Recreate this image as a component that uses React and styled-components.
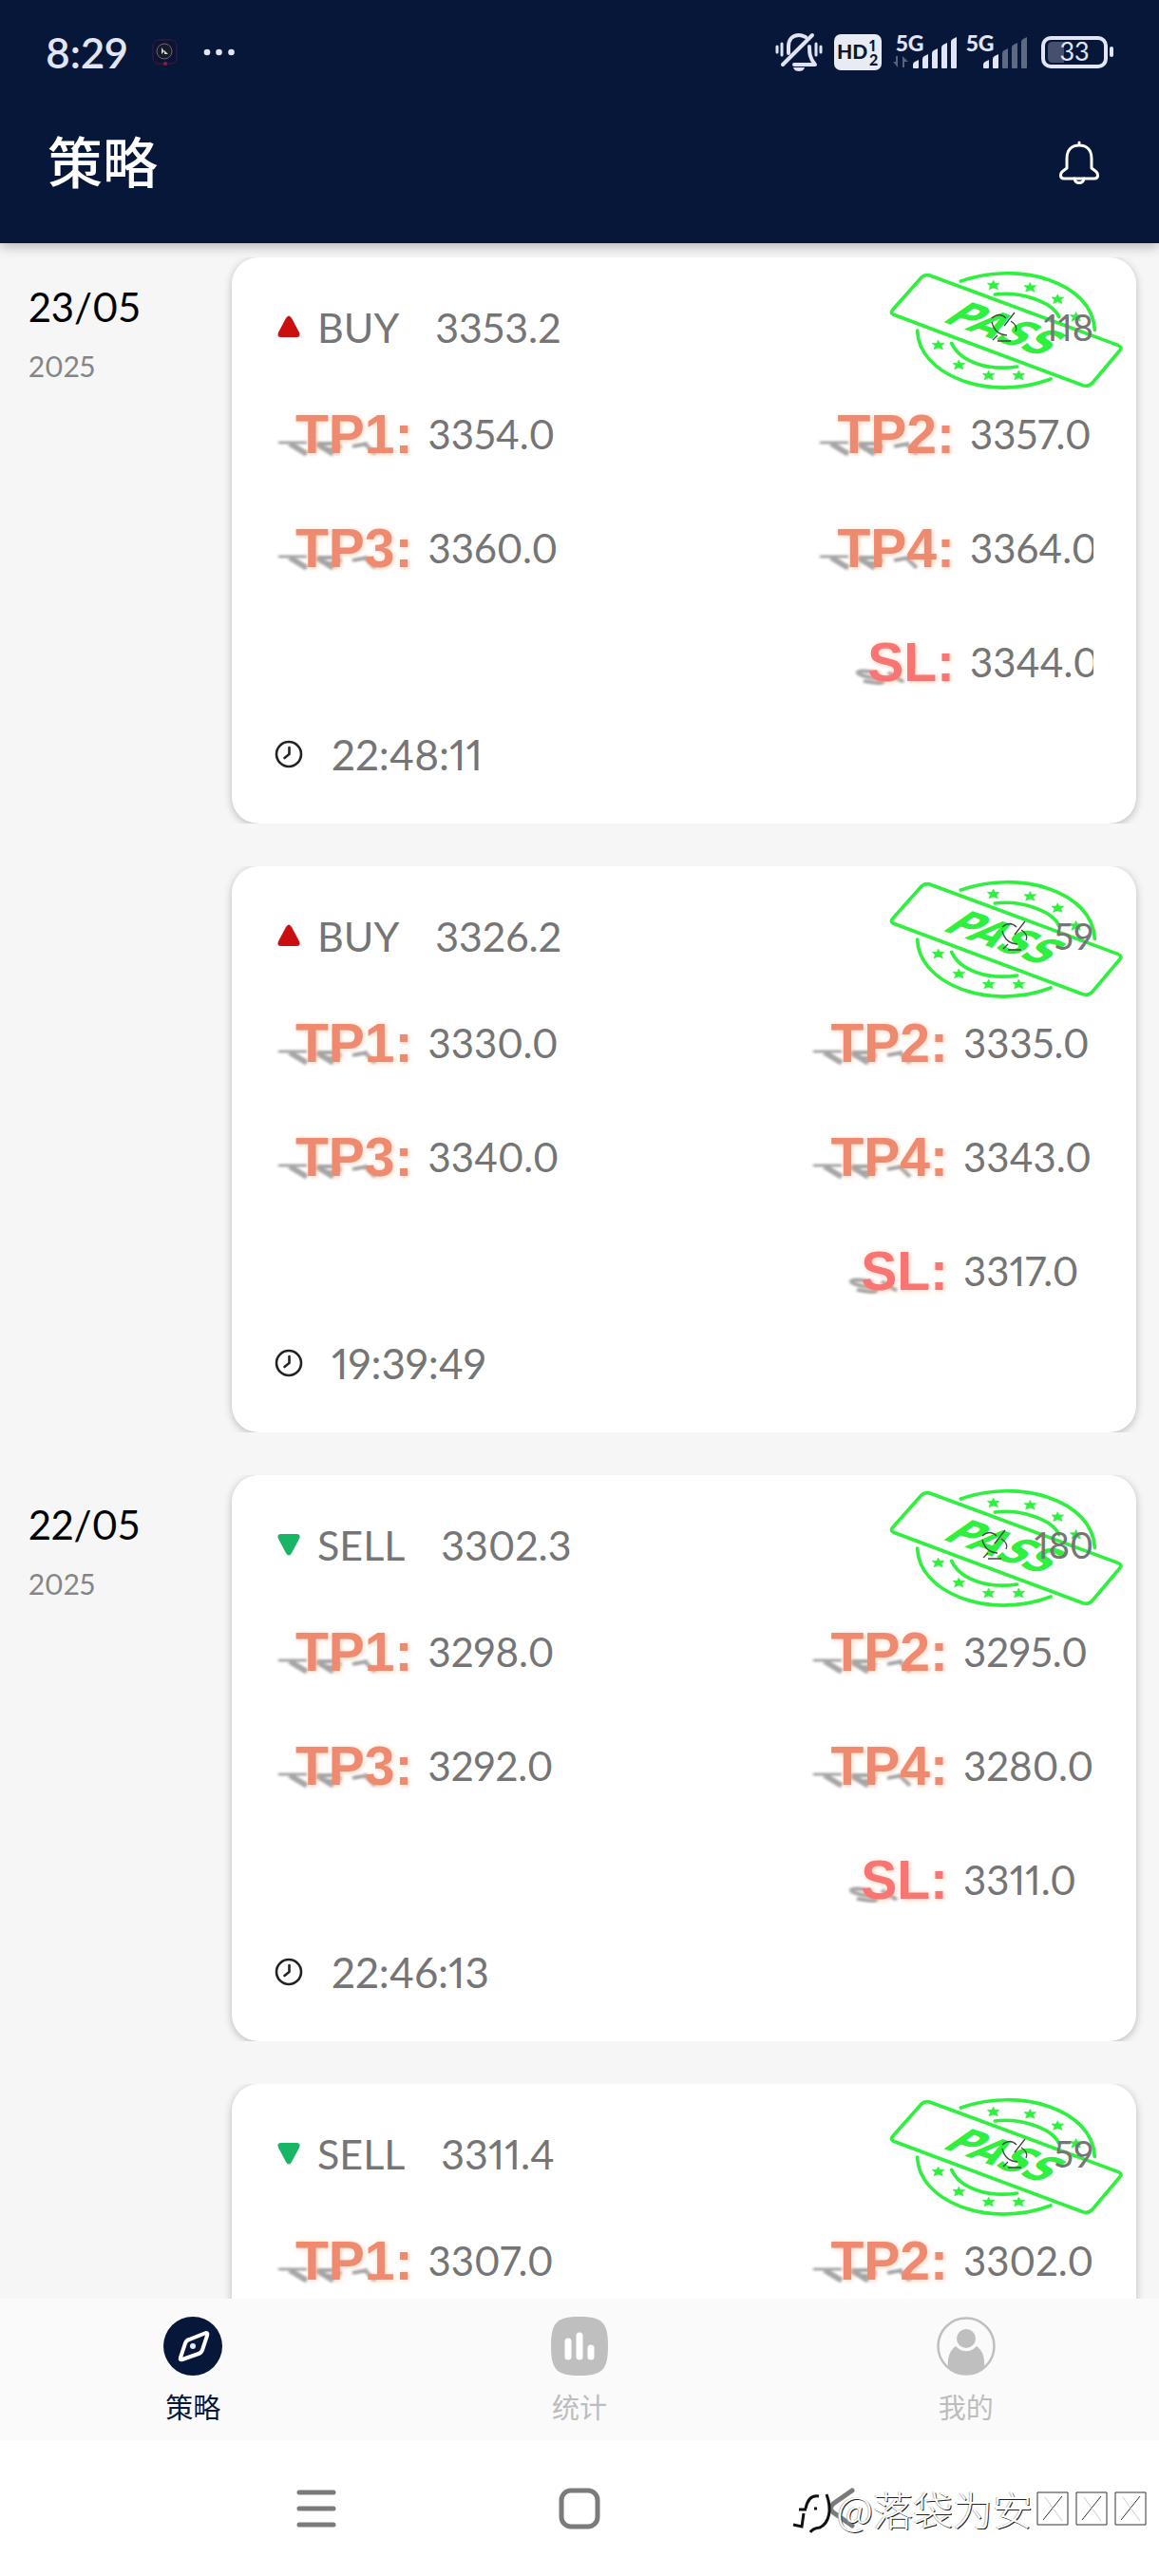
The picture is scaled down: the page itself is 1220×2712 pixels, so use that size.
import React from 'react';
import styled, { createGlobalStyle } from 'styled-components';

const GlobalStyle = createGlobalStyle`
  * {
    box-sizing: border-box;
  }

  body {
    margin: 0;
    background: #f6f6f6;
    font-family: Lato, 'Noto Sans CJK SC', sans-serif;
    font-variant-numeric: proportional-nums;
  }

  svg {
    display: block;
    flex-shrink: 0;
    overflow: visible;
  }
`;

const Screen = styled.div`
  height: 100vh;
  display: flex;
  flex-direction: column;
  overflow: hidden;
`;

const Header = styled.header`
  flex-shrink: 0;
  background: #071739;
  box-shadow: 0 4px 12px rgba(0, 0, 0, 0.25);
  z-index: 2;
`;

const StatusBar = styled.div`
  display: flex;
  align-items: center;
  height: 110px;
  padding: 0 46px 0 48px;
`;

const Clock = styled.span`
  color: #e2e5f6;
  font-size: 44px;
  font-weight: 600;
  line-height: 48px;
`;

const StatusLeft = styled.div`
  display: flex;
  align-items: center;
  gap: 26px;
`;

const StatusRight = styled.div`
  display: flex;
  align-items: center;
  gap: 12px;
  margin-left: auto;
`;

const SignalGroup = styled.div`
  display: flex;
  gap: 4px;
`;

const TitleBar = styled.div`
  display: flex;
  align-items: center;
  justify-content: space-between;
  height: 146px;
  padding: 0 62px 24px 50px;
`;

const Title = styled.h1`
  margin: 0;
  color: #fff;
  font-size: 58px;
  font-weight: 500;
  line-height: 80px;
`;

const IconButton = styled.button`
  display: flex;
  padding: 0;
  border: none;
  background: none;
  cursor: pointer;
`;

const List = styled.main`
  flex: 1;
  min-height: 0;
  overflow: hidden;
  padding: 15px 24px 0 30px;
`;

const Entry = styled.section`
  display: flex;
  margin-bottom: 45px;
`;

const DateColumn = styled.div`
  width: 214px;
  flex-shrink: 0;
  padding-top: 28px;
`;

const Day = styled.div`
  color: #000;
  font-size: 42px;
  line-height: 48px;
`;

const Year = styled.div`
  margin-top: 18px;
  color: #858585;
  font-size: 30px;
  line-height: 40px;
`;

const Card = styled.article`
  position: relative;
  flex: 1;
  min-height: 596px;
  padding: 43px 45px 42px;
  border-radius: 28px;
  background: #fff;
  box-shadow: 0 2px 8px rgba(0, 0, 0, 0.25);
  clip-path: inset(0 -12px);
  color: #757575;
  font-size: 42px;
`;

const CardHead = styled.div`
  display: flex;
  align-items: center;
  height: 60px;
  font-size: 43px;
`;

const Side = styled.span`
  margin: 0 38px 0 15px;
`;

const Pips = styled.span`
  position: relative;
  display: flex;
  align-items: center;
  gap: 26px;
  margin-left: auto;
  font-size: 38px;
  z-index: 1;
`;

const StampBox = styled.div`
  position: absolute;
  top: 14px;
  right: 14px;
`;

const Targets = styled.div`
  display: grid;
  grid-template-columns: 1fr auto;
  grid-auto-rows: 120px;
  align-items: center;
  margin-top: 23px;
`;

const Target = styled.div`
  display: flex;
  align-items: center;
  justify-content: ${props => props.$right ? 'flex-end' : 'flex-start'};
  gap: 16px;
  padding-left: 22px;
`;

const Label = styled.span`
  position: relative;
  color: ${props => props.$stop ? '#f87573' : '#ee8a70'};
  font-family: 'Liberation Sans', Arial, sans-serif;
  font-size: 57px;
  font-weight: 700;
  line-height: 64px;
  text-shadow: 1px 1px 5px rgba(255, 170, 130, 0.6);
`;

const LabelShade = styled.svg`
  position: absolute;
  left: -20px;
  bottom: 7px;
  z-index: 0;
`;

const LabelText = styled.span`
  position: relative;
`;

const Value = styled.span`
  width: ${props => props.$width}px;
  overflow: ${props => props.$clip ? 'hidden' : 'visible'};
  white-space: nowrap;
  line-height: 56px;
`;

const CardFoot = styled.div`
  display: flex;
  align-items: center;
  gap: 30px;
  height: 60px;
  margin-top: 7px;
  font-size: 44px;
`;

const TabBar = styled.nav`
  display: grid;
  grid-template-columns: repeat(3, 1fr);
  flex-shrink: 0;
  height: 149px;
  padding-top: 19px;
  background: #fafafa;
  z-index: 1;
`;

const Tab = styled.a`
  display: flex;
  flex-direction: column;
  align-items: center;
  gap: 14px;
  color: ${props => props.$active ? '#071739' : '#bdbdbd'};
  font-size: 29px;
  line-height: 40px;
  text-decoration: none;
`;

const SystemNav = styled.div`
  position: relative;
  display: grid;
  grid-template-columns: repeat(3, 1fr);
  align-items: center;
  justify-items: center;
  flex-shrink: 0;
  height: 143px;
  padding: 0 16%;
  background: #fff;
  z-index: 1;
`;

const Watermark = styled.div`
  position: absolute;
  right: 11px;
  top: 42px;
  display: flex;
  align-items: center;
  color: #fff;
  font-family: 'Noto Sans CJK SC', sans-serif;
  font-size: 42px;
  font-weight: 300;
  line-height: 60px;
  text-shadow: 1px 1px 0 #222, -1px 0 0 #bbb;
`;

const strategies = [
  {
    day: '23/05', year: '2025', side: 'BUY', price: '3353.2', pips: '118', time: '22:48:11', valueWidth: 130, clip: true,
    targets: ['3354.0', '3357.0', '3360.0', '3364.0'], stop: '3344.0',
  },
  {
    side: 'BUY', price: '3326.2', pips: '59', time: '19:39:49', valueWidth: 137,
    targets: ['3330.0', '3335.0', '3340.0', '3343.0'], stop: '3317.0',
  },
  {
    day: '22/05', year: '2025', side: 'SELL', price: '3302.3', pips: '180', time: '22:46:13', valueWidth: 137,
    targets: ['3298.0', '3295.0', '3292.0', '3280.0'], stop: '3311.0',
  },
  {
    side: 'SELL', price: '3311.4', pips: '59', valueWidth: 137,
    targets: ['3307.0', '3302.0'],
  },
];

const MuteIcon = () => (
  <svg width="50" height="42" viewBox="0 0 50 42" fill="none" stroke="#dfe3f4" strokeWidth="4" strokeLinecap="round" strokeLinejoin="round">
    <path d="M14 22v-7c0-7 4-12 11-12 3 0 5 1 7 2M36 15c0 6 0 12 6 19H20" />
    <path d="M8 34L39 3" />
    <path d="M2 15v6M7 12v12M43 12v12M48 15v6" strokeWidth="3" />
    <path d="M19 37h12c-1 3-3 4-6 4s-5-1-6-4z" fill="#dfe3f4" stroke="none" />
  </svg>
);

const HdIcon = () => (
  <svg width="50" height="38" viewBox="0 0 50 38" fontFamily="Lato, sans-serif" fontWeight="900" fill="#071739">
    <rect width="50" height="38" rx="7" fill="#e8eaf4" />
    <text x="3" y="26" fontSize="21">HD</text>
    <text x="37" y="18" fontSize="16">1</text>
    <text x="37" y="33" fontSize="16">2</text>
  </svg>
);

const Signal = ({ level, data }) => (
  <svg width="70" height="36" viewBox="0 0 70 36" fill="#e2e5f6">
    <text x="3" y="17" fontSize="23" fontWeight="900" fontFamily="Lato, sans-serif">5G</text>
    {data && <path d="M5 22v12l-5-6h3v-6zM10 34V22l6 6h-4v6z" fill="#58617d" />}
    {[0, 1, 2, 3, 4].map((i) => (
      <path
        key={i}
        d={`M${21 + i * 10} 34v${-3 - i * 6}q0-2 2-3l4-2v${8 + i * 6}q0 1-1 1h-4q-1 0-1-1z`}
        opacity={i < level ? 1 : 0.4}
      />
    ))}
  </svg>
);

const BatteryIcon = () => (
  <svg width="78" height="34" viewBox="0 0 78 34">
    <rect x="2" y="2" width="66" height="30" rx="8" fill="none" stroke="#e2e5f6" strokeWidth="4" />
    <path d="M12 6h12v22H12q-5 0-5-5V11q0-5 5-5z" fill="#474f6e" />
    <rect x="72" y="11" width="4" height="11" rx="2" fill="#e2e5f6" />
    <text x="35" y="26" fontSize="27" textAnchor="middle" fill="#e2e5f6" fontFamily="Lato, sans-serif">33</text>
  </svg>
);

const AppBadge = () => (
  <svg width="28" height="28" viewBox="0 0 28 28" fill="none">
    <rect x="1" y="1" width="25" height="25" rx="6" fill="#0b1433" stroke="#3c1c44" />
    <circle cx="13" cy="13" r="8" fill="#171a28" stroke="#6e6377" />
    <path d="M10 9l3 4-3 3zM13 12l4 4h-4z" fill="#cfd5c8" />
    <circle cx="14" cy="26" r="2" fill="#8c1f45" />
  </svg>
);

const DotsIcon = () => (
  <svg width="34" height="8" viewBox="0 0 34 8" fill="#e2e5f6">
    <circle cx="4" cy="4" r="3.300" />
    <circle cx="16.500" cy="4" r="3.300" />
    <circle cx="29.500" cy="4" r="3.300" />
  </svg>
);

const BellIcon = () => (
  <svg width="44" height="46" viewBox="0 0 44 46" fill="none" stroke="#fff" strokeWidth="3" strokeLinecap="round" strokeLinejoin="round">
    <path d="M22 2v3M9 19C9 10 14 5 22 5s13 5 13 14v10l4 3c3 2 4 8-1 8H6c-5 0-4-6-1-8l4-3z" />
    <path d="M17 40c1 6 9 6 10 0" />
  </svg>
);

const Arrow = ({ up }) => (
  <svg width="30" height="30" viewBox="0 0 30 30">
    {up ? (
      <path d="M12 6q3-5 6 0l8 15q2 5-3 5H7q-5 0-3-5z" fill="#cb0e10" />
    ) : (
      <path d="M12 24q3 5 6 0l8-15q2-5-3-5H7q-5 0-3 5z" fill="#18b566" />
    )}
  </svg>
);

const PipsIcon = () => (
  <svg width="30" height="32" viewBox="0 0 30 32" fill="none" stroke="#444" strokeWidth="1.300">
    <path d="M1 7Q9 0 16 7M21 10Q29 15 26 21M1 11Q4 24 17 25" />
    <path d="M25 1L14 15M7 25L2 30M7 31H21" />
  </svg>
);

const TimeIcon = () => (
  <svg width="30" height="30" viewBox="0 0 30 30" fill="none" stroke="#222" strokeWidth="2.600" strokeLinecap="round">
    <circle cx="15" cy="15" r="13" />
    <path d="M15.500 8v7l-5 4" />
  </svg>
);

const stars = [[677, 118], [793, 125], [880, 162], [938, 218], [503, 307], [568, 370], [662, 403], [757, 403]];

const Stamp = () => (
  <svg width="246" height="124" viewBox="348 73 738 372" fill="none" stroke="#2ff03e" strokeWidth="11" strokeLinecap="round">
    <path d="M450 94Q462 82 482 90L1070 308Q1086 315 1076 325L990 427Q976 442 956 434L362 212Q350 206 360 195Z" />
    <path d="M574 106C760 40 990 110 997 260M437 262C440 400 660 490 858 415" />
    <path d="M682 148C760 138 860 168 884 218M545 302C570 360 660 390 752 376" />
    {stars.map(([x, y]) => (
      <path
        key={x}
        d="M0-14L5-5 19-5 10 3 14 14 0 9-14 14-10 3-19-5-5-5z"
        transform={`translate(${x} ${y})`}
        fill="#2ff03e"
        strokeWidth="2"
      />
    ))}
    <text
      transform="translate(510 232) rotate(19) skewX(-36)"
      fontSize="122"
      fontWeight="700"
      fontFamily="'DejaVu Sans', sans-serif"
      fill="#2ff03e"
      stroke="none"
    >
      PASS
    </text>
  </svg>
);

const CompassIcon = () => (
  <svg width="64" height="62" viewBox="0 0 64 62" fill="none">
    <circle cx="32" cy="31" r="31" fill="#071739" />
    <path d="M46 17q2 0 1 3l-5 15q-1 3-4 4l-17 6q-3 1-2-2l5-15q1-3 4-4z" stroke="#fff" strokeWidth="4" />
    <circle cx="32" cy="31" r="3" fill="#dfe9ff" />
  </svg>
);

const StatsIcon = () => (
  <svg width="64" height="62" viewBox="0 0 64 62">
    <path d="M32 0c24 0 30 6 30 31s-6 31-30 31S2 56 2 31 8 0 32 0z" fill="#bfbfbf" />
    <path d="M20 26v16M32 20v22M44 33v9" stroke="#fff" strokeWidth="7" strokeLinecap="round" />
  </svg>
);

const ProfileIcon = () => (
  <svg width="64" height="62" viewBox="0 0 64 62" fill="#bfbfbf">
    <circle cx="32" cy="31" r="29.500" fill="none" stroke="#bfbfbf" strokeWidth="2.500" />
    <circle cx="32" cy="23" r="10" />
    <path d="M21 31c6 7 16 7 22 0 6 4 9 12 8 22-11 10-27 10-38 0-1-10 2-18 8-22z" />
  </svg>
);

const Shade = ({ stop }) => (
  <LabelShade width="100" height="22" viewBox="0 0 100 22" fill="none" stroke="#808080" strokeWidth="4" opacity="0.7">
    <defs>
      <filter id="soft" x="-10%" y="-50%" width="120%" height="200%">
        <feGaussianBlur stdDeviation="1.800 1.200" />
      </filter>
    </defs>
    {stop ? (
      <path filter="url(#soft)" d="M32 9C20 5 4 6 12 10s22 3 24 7-12 1-20 0M42 8l16 10" />
    ) : (
      <g filter="url(#soft)">
        <path d="M2 6h30" strokeWidth="3" />
        <path d="M14 7l18 11M42 7l18 11" strokeWidth="6" />
        <path d="M42 7h18q12 3 2 6h-8M96 7l-16 3M92 6l12 12" />
      </g>
    )}
  </LabelShade>
);

const Price = ({ name, value, width, right, stop, clip }) => (
  <Target $right={right}>
    <Label $stop={stop}>
      <Shade stop={stop} />
      <LabelText>{name}:</LabelText>
    </Label>
    <Value $width={width} $clip={clip}>{value}</Value>
  </Target>
);

const Strategy = ({ item }) => (
  <Entry>
    <DateColumn>
      {item.day && <Day>{item.day}</Day>}
      {item.year && <Year>{item.year}</Year>}
    </DateColumn>
    <Card>
      <StampBox>
        <Stamp />
      </StampBox>
      <CardHead>
        <Arrow up={item.side === 'BUY'} />
        <Side>{item.side}</Side>
        <span>{item.price}</span>
        <Pips>
          <PipsIcon />
          {item.pips}
        </Pips>
      </CardHead>
      <Targets>
        {item.targets.map((value, i) => (
          <Price
            key={i}
            name={`TP${i + 1}`}
            value={value}
            right={i % 2 === 1}
            width={i % 2 ? item.valueWidth : 150}
            clip={item.clip}
          />
        ))}
        <span />
        {item.stop && (
          <Price name="SL" value={item.stop} width={item.valueWidth} clip={item.clip} right stop />
        )}
      </Targets>
      {item.time && (
        <CardFoot>
          <TimeIcon />
          <span>{item.time}</span>
        </CardFoot>
      )}
    </Card>
  </Entry>
);

const App = () => {
  return (
    <Screen>
      <GlobalStyle />
      <Header>
        <StatusBar>
          <StatusLeft>
            <Clock>8:29</Clock>
            <AppBadge />
            <DotsIcon />
          </StatusLeft>
          <StatusRight>
            <MuteIcon />
            <HdIcon />
            <SignalGroup>
              <Signal level={5} data />
              <Signal level={2} />
            </SignalGroup>
            <BatteryIcon />
          </StatusRight>
        </StatusBar>
        <TitleBar>
          <Title>策略</Title>
          <IconButton aria-label="通知">
            <BellIcon />
          </IconButton>
        </TitleBar>
      </Header>

      <List>
        {strategies.map((item, i) => (
          <Strategy key={i} item={item} />
        ))}
      </List>

      <TabBar>
        <Tab href="#strategy" $active>
          <CompassIcon />
          策略
        </Tab>
        <Tab href="#stats">
          <StatsIcon />
          统计
        </Tab>
        <Tab href="#mine">
          <ProfileIcon />
          我的
        </Tab>
      </TabBar>

      <SystemNav>
        <IconButton aria-label="菜单">
          <svg width="44" height="44" viewBox="0 0 44 44" stroke="#7b7b7b" strokeWidth="5" strokeLinecap="round">
            <path d="M4 5h36M4 22h36M4 39h36" />
          </svg>
        </IconButton>
        <IconButton aria-label="主页">
          <svg width="44" height="44" viewBox="0 0 44 44" fill="none" stroke="#7b7b7b" strokeWidth="5">
            <rect x="3" y="3" width="38" height="38" rx="10" />
          </svg>
        </IconButton>
        <IconButton aria-label="返回">
          <svg width="44" height="44" viewBox="0 0 44 44" fill="none" stroke="#7b7b7b" strokeWidth="5" strokeLinecap="round">
            <path d="M32 3L12 17q-5 5 0 9l20 14" />
          </svg>
        </IconButton>
        <Watermark>
          <svg width="48" height="54" viewBox="0 0 48 54" fill="none" stroke="#111" strokeWidth="3">
            <path d="M29 14Q18 12 15 27M8 28h8M13 32l-2 14-9-2M24 27h3" />
            <path d="M37 12C43 28 40 42 30 47Q22 48 20 52" />
          </svg>
          @落袋为安
          <svg width="122" height="40" viewBox="0 0 122 40" fill="none" stroke="#333">
            {[5, 46, 87].map((x) => (
              <path key={x} d={`M${x} 3h32v34h-32zM${x + 6} 32L${x + 26} 7`} />
            ))}
            {[5, 46, 87].map((x) => (
              <path key={x} d={`M${x + 8} 8L${x + 26} 33`} stroke="#ccc" />
            ))}
          </svg>
        </Watermark>
      </SystemNav>
    </Screen>
  );
};

export default App;
